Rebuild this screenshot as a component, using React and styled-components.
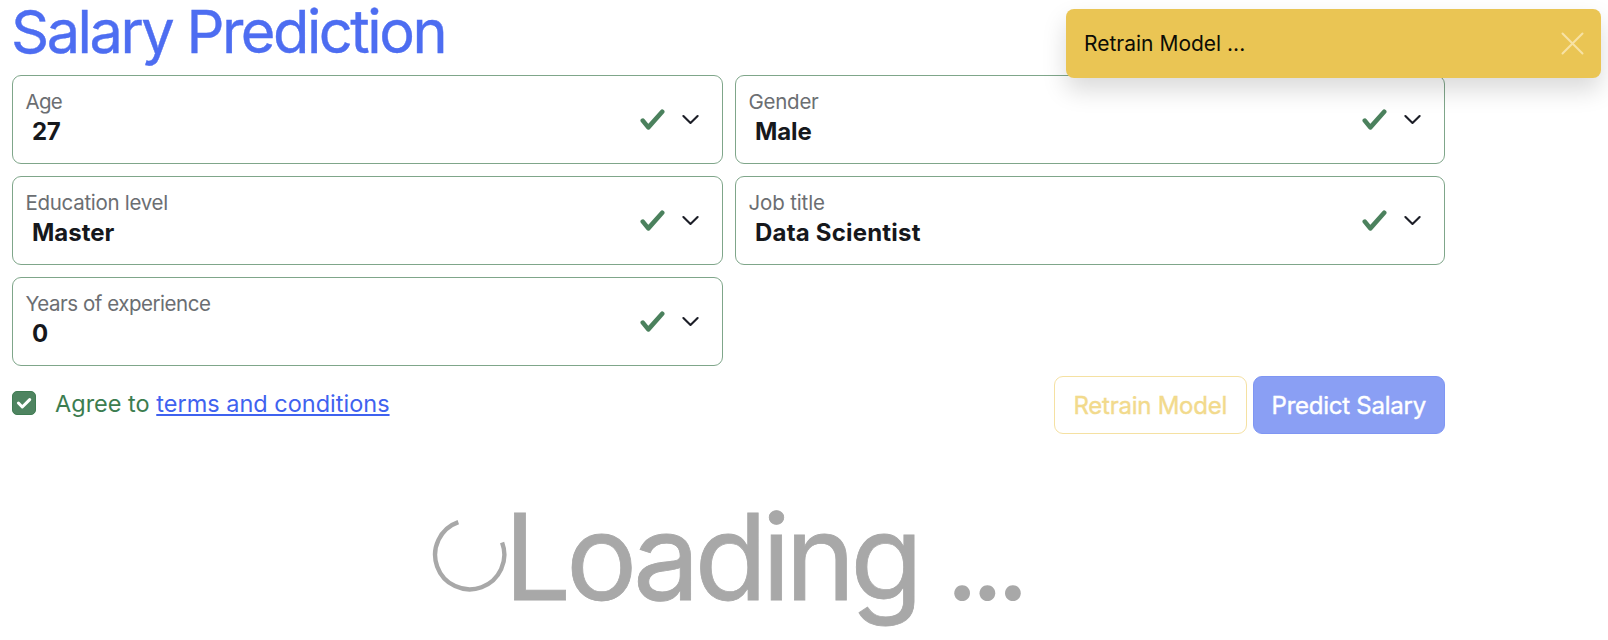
import React from "react";
import styled, { createGlobalStyle } from "styled-components";

const GlobalStyle = createGlobalStyle`
  * { box-sizing: border-box; }
  body {
    margin: 0;
    background: #fff;
    color: #16181c;
    font-family: Inter, "Liberation Sans", sans-serif;
    overflow: hidden;
  }
`;

const Page = styled.main`
  position: relative;
  width: 1608px;
  height: 640px;
  padding: 0 163px 0 12px;
`;

const Title = styled.h1`
  margin: 0 0 13px -1px;
  font-size: 59.5px;
  line-height: 62px;
  font-weight: 400;
  letter-spacing: -2.5px;
  -webkit-text-stroke: 0.4px currentColor;
  color: #4d6df1;
  white-space: nowrap;
`;

const Fields = styled.div`
  display: grid;
  grid-template-columns: 711px 710px;
  gap: 12px;
`;

const Field = styled.div`
  display: flex;
  align-items: center;
  height: 89px;
  padding: 0 23px 0 12.5px;
  border: 1px solid #7fa68a;
  border-radius: 9px;
`;

const FieldText = styled.div`
  flex: 1;
  padding-bottom: 4px;
  white-space: nowrap;
`;

const Label = styled.div`
  font-size: 20.5px;
  line-height: 28px;
  letter-spacing: ${(p) => p.$track}px;
  color: #6b6e72;
`;

const Value = styled.div`
  padding-left: 6.5px;
  font-size: 24px;
  line-height: 31px;
  font-weight: 700;
  letter-spacing: ${(p) => p.$track}px;
`;

const FieldIcons = styled.div`
  display: flex;
  align-items: center;
  gap: 17px;
  svg { display: block; }
`;

const Actions = styled.div`
  display: flex;
  align-items: flex-start;
  justify-content: space-between;
  padding-top: 10px;
`;

const Agreement = styled.label`
  display: flex;
  align-items: center;
  height: 54px;
  gap: 19px;
  font-size: 23.5px;
  line-height: 30px;
  color: #3c7d50;
  white-space: nowrap;
`;

const AgreementText = styled.span`
  padding-top: 2px;
`;

const Checkbox = styled.span`
  display: grid;
  place-items: center;
  width: 24px;
  height: 24px;
  border-radius: 5px;
  background: #4e8460;
  border: 1px solid #3f7c53;
`;

const TermsLink = styled.a`
  color: #3f62ef;
  text-decoration: underline;
  text-decoration-thickness: 1.5px;
  text-underline-offset: 2px;
  text-decoration-skip-ink: none;
`;

const ButtonGroup = styled.div`
  display: flex;
  gap: 6px;
`;

const Button = styled.button`
  width: 192.5px;
  height: 58px;
  padding: 0;
  border: 1px solid ${(p) => (p.$primary ? "#7f96f3" : "#f5e1a2")};
  border-radius: 9px;
  background: ${(p) => (p.$primary ? "#8a9ff4" : "#fff")};
  color: ${(p) => (p.$primary ? "#fff" : "#f2da8c")};
  font-family: inherit;
  font-size: 24px;
  letter-spacing: -0.25px;
  -webkit-text-stroke: 0.4px currentColor;
  white-space: nowrap;
`;

const LoadingRow = styled.div`
  display: flex;
  align-items: center;
  width: 600px;
  height: 144px;
  margin: 51px 0 0 420px;
  color: #a8a8a8;
  svg { flex: none; margin: 0 -10px 6px 0; }
`;

const LoadingText = styled.span`
  font-size: 119px;
  line-height: 144px;
  letter-spacing: -5.4px;
  word-spacing: -1px;
  -webkit-text-stroke: 0.8px currentColor;
  white-space: nowrap;
`;

const Dots = styled.span`
  letter-spacing: -8.8px;
  -webkit-text-stroke: 0;
`;

const Toast = styled.div`
  position: absolute;
  top: 9px;
  left: 1066px;
  display: flex;
  align-items: center;
  justify-content: space-between;
  width: 535px;
  height: 69px;
  padding: 0 17px 0 18px;
  border-radius: 8px;
  background: #eac554;
  box-shadow: 0 12px 24px rgba(0, 0, 0, 0.15);
  color: #0d0d05;
  font-size: 21px;
  white-space: nowrap;
  svg { display: block; }
`;

const CheckIcon = () => (
  <svg width="25" height="22" viewBox="0 0 25 22" fill="none">
    <path d="M2.8 11.6 8.3 18.4 22.2 2.8" stroke="#4b815d" strokeWidth="4.6" strokeLinecap="round" strokeLinejoin="round" />
  </svg>
);

const ChevronIcon = () => (
  <svg width="17" height="12" viewBox="0 0 17 12" fill="none">
    <path d="m1.4 2 7.1 7 7.1-7" stroke="#1c1e27" strokeWidth="2.1" strokeLinecap="round" strokeLinejoin="round" />
  </svg>
);

const TickIcon = () => (
  <svg width="16" height="14" viewBox="0 0 16 14" fill="none">
    <path d="m2.4 7 3.9 4 7.4-7.4" stroke="#fff" strokeWidth="3" strokeLinecap="round" strokeLinejoin="round" />
  </svg>
);

const CloseIcon = () => (
  <svg width="23" height="23" viewBox="0 0 23 23" fill="none">
    <path d="m1.5 1.5 20 20m0-20-20 20" stroke="#f7e2a5" strokeWidth="2" strokeLinecap="round" />
  </svg>
);

const Spinner = () => (
  <svg width="82" height="82" viewBox="0 0 82 82" fill="none">
    <path d="M70.1 29.6A34.6 34.6 0 1 1 26.3 9.1" stroke="currentColor" strokeWidth="4.4" />
  </svg>
);

const FIELDS = [
  { label: "Age", value: "27", labelTrack: -0.75, valueTrack: -0.4 },
  { label: "Gender", value: "Male", labelTrack: -0.25, valueTrack: -0.1 },
  { label: "Education level", value: "Master", labelTrack: -0.3, valueTrack: 0 },
  { label: "Job title", value: "Data Scientist", labelTrack: -0.15, valueTrack: 0.2 },
  { label: "Years of experience", value: "0", labelTrack: -0.47, valueTrack: 0 },
];

export default function App() {
  return (
    <>
      <GlobalStyle />
      <Page>
        <Title>Salary Prediction</Title>
        <Fields>
          {FIELDS.map((f) => (
            <Field key={f.label}>
              <FieldText>
                <Label $track={f.labelTrack}>{f.label}</Label>
                <Value $track={f.valueTrack}>{f.value}</Value>
              </FieldText>
              <FieldIcons>
                <CheckIcon />
                <ChevronIcon />
              </FieldIcons>
            </Field>
          ))}
        </Fields>
        <Actions>
          <Agreement>
            <Checkbox><TickIcon /></Checkbox>
            <AgreementText>Agree to <TermsLink>terms and conditions</TermsLink></AgreementText>
          </Agreement>
          <ButtonGroup>
            <Button disabled>Retrain Model</Button>
            <Button disabled $primary>Predict Salary</Button>
          </ButtonGroup>
        </Actions>
        <LoadingRow>
          <Spinner />
          <LoadingText>Loading <Dots>...</Dots></LoadingText>
        </LoadingRow>
        <Toast>
          <span>Retrain Model ...</span>
          <CloseIcon />
        </Toast>
      </Page>
    </>
  );
}
